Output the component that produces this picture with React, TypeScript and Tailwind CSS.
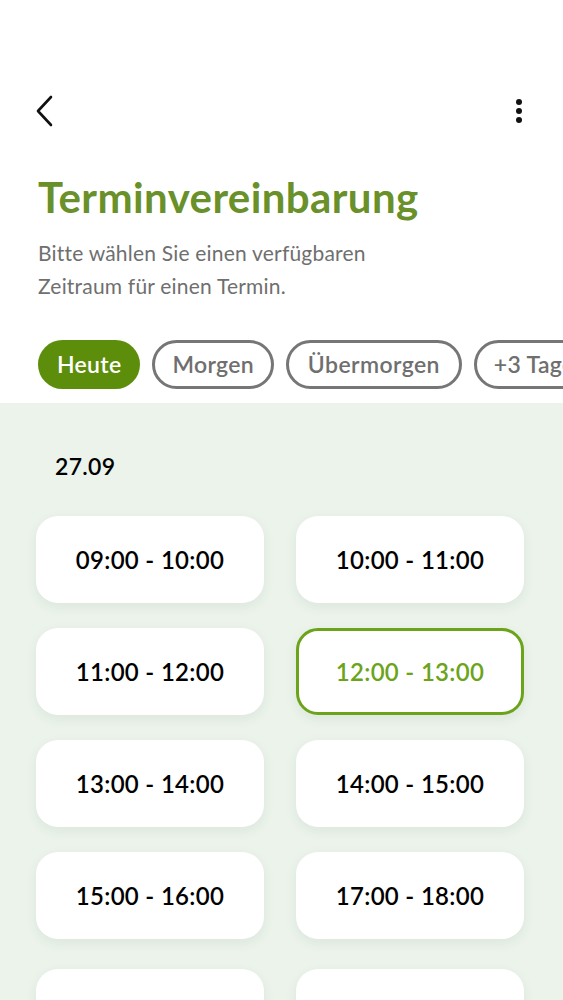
import React from "react";

const slots: [string, string][] = [
  ["09:00 - 10:00", "10:00 - 11:00"],
  ["11:00 - 12:00", "12:00 - 13:00"],
  ["13:00 - 14:00", "14:00 - 15:00"],
  ["15:00 - 16:00", "17:00 - 18:00"],
];

function Slot({ label, selected }: { label: string; selected?: boolean }) {
  return (
    <div
      className={
        "h-[87px] rounded-[22px] bg-white flex items-center justify-center text-[24px] font-semibold tracking-[0.3px] shadow-[0_4px_12px_rgba(60,90,60,0.08)] " +
        (selected ? "border-[3px] border-[#6ba41b] text-[#6ba41b] font-medium" : "text-black")
      }
    >
      {label}
    </div>
  );
}

export default function App() {
  return (
    <div className="w-[563px] h-[1000px] overflow-hidden bg-white font-['Lato',sans-serif]">
      <div className="flex items-center justify-between pl-[34px] pr-[40px] pt-[95px]">
        <svg width="22" height="32" viewBox="0 0 22 32" fill="none">
          <path d="M17 2 L4 16 L17 30" stroke="#111" strokeWidth="2.6" strokeLinecap="round" strokeLinejoin="round" />
        </svg>
        <svg width="8" height="26" viewBox="0 0 8 26">
          <circle cx="4" cy="4" r="3" fill="#111" />
          <circle cx="4" cy="13" r="3" fill="#111" />
          <circle cx="4" cy="22" r="3" fill="#111" />
        </svg>
      </div>
      <h1 className="mt-[46px] px-[38px] text-[42px] font-bold leading-[48px] text-[#6a902a] tracking-[0.4px]">
        Terminvereinbarung
      </h1>
      <p className="mt-[15px] px-[38px] text-[21px] leading-[33px] text-[#6f6f6f] tracking-[0.2px]">
        Bitte wählen Sie einen verfügbaren
        <br />
        Zeitraum für einen Termin.
      </p>
      <div className="mt-[38px] flex gap-[12px] pl-[38px] overflow-hidden whitespace-nowrap">
        <div className="h-[49px] shrink-0 rounded-full bg-[#5d8e0b] px-[19px] flex items-center text-[23px] font-semibold text-white tracking-[0.3px]">
          Heute
        </div>
        <div className="h-[49px] shrink-0 rounded-full border-[3px] border-[#767676] px-[17px] flex items-center text-[23px] font-semibold text-[#6f6f6f] tracking-[0.3px]">
          Morgen
        </div>
        <div className="h-[49px] shrink-0 rounded-full border-[3px] border-[#767676] px-[19px] flex items-center text-[23px] font-semibold text-[#6f6f6f] tracking-[0.4px]">
          Übermorgen
        </div>
        <div className="h-[49px] shrink-0 rounded-full border-[3px] border-[#767676] px-[17px] flex items-center text-[23px] font-semibold text-[#6f6f6f] tracking-[0.3px]">
          +3 Tage
        </div>
      </div>
      <div className="mt-[14px] bg-[#ebf3eb] pt-[50px] h-[700px]">
        <div className="pl-[55px] text-[23px] font-semibold leading-[26px] text-black tracking-[0.3px]">27.09</div>
        <div className="mt-[37px] grid grid-cols-[228px_228px] gap-x-[32px] gap-y-[25px] pl-[36px]">
          {slots.map(([a, b], i) => (
            <React.Fragment key={i}>
              <Slot label={a} />
              <Slot label={b} selected={b === "12:00 - 13:00"} />
            </React.Fragment>
          ))}
        </div>
        <div className="mt-[30px] grid grid-cols-[228px_228px] gap-x-[32px] pl-[36px]">
          <div className="h-[87px] rounded-[22px] bg-white shadow-[0_4px_12px_rgba(60,90,60,0.08)]" />
          <div className="h-[87px] rounded-[22px] bg-white shadow-[0_4px_12px_rgba(60,90,60,0.08)]" />
        </div>
      </div>
    </div>
  );
}
